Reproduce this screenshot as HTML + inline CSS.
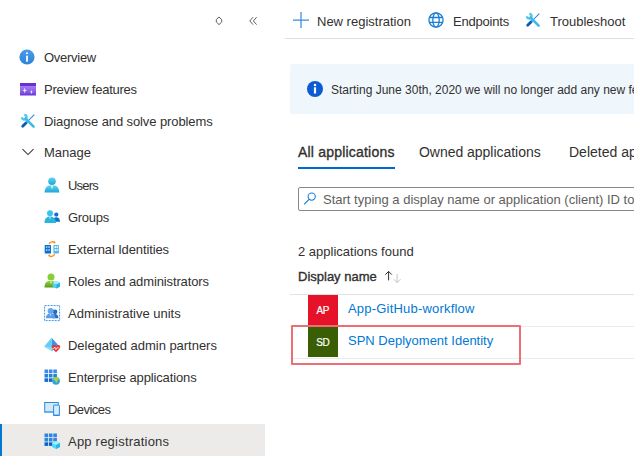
<!DOCTYPE html>
<html><head><meta charset="utf-8">
<style>
html,body{margin:0;padding:0;background:#fff;width:634px;height:458px;overflow:hidden;position:relative}
body{font-family:"Liberation Sans",sans-serif;color:#323130;font-size:13px}
.a{position:absolute;white-space:nowrap;line-height:16px}
.ic{position:absolute;overflow:visible}
.sel{position:absolute;left:0;top:424px;width:265px;height:32px;background:#edebe9}
.selbar{position:absolute;left:0;top:424px;width:2px;height:32px;background:#0078d4}
.sep{position:absolute;left:285px;top:38px;width:349px;height:1px;background:#e1dfdd}
.banner{position:absolute;left:290px;top:64px;width:360px;height:50px;background:#eff6fc;border-radius:2px}
.tabline{position:absolute;left:298px;top:167px;width:97px;height:2px;background:#0068d0}
.search{position:absolute;left:298px;top:187px;width:360px;height:22px;border:1px solid #8a8886;border-radius:2px}
.rowline{position:absolute;left:290px;width:344px;height:1px;background:#edebe9}
.badge{position:absolute;width:30px;height:30px;color:#fff;font-size:10px;line-height:32px;text-align:center;letter-spacing:-0.4px;text-indent:-0.4px;-webkit-text-stroke:0.2px #fff;box-sizing:border-box}
.link{color:#0078d4}
.redbox{position:absolute;left:291px;top:325px;width:230px;height:40px;border:2px solid #ec6f75;box-sizing:border-box;border-radius:1px}
</style></head><body>
<!-- sidebar top controls -->
<svg class="ic" style="left:214px;top:15px" width="10" height="12" viewBox="0 0 10 12"><path d="M5 2 L7.7 4.6 L7.7 7 L5 9.6 L2.3 7 L2.3 4.6 Z" fill="none" stroke="#605e5c" stroke-width="1"/></svg>
<svg class="ic" style="left:247px;top:15px" width="12" height="12" viewBox="0 0 12 12"><path d="M6 2.2 L2.8 6 L6 9.6 M9.6 2.2 L6.4 6 L9.6 9.6" fill="none" stroke="#605e5c" stroke-width="1"/></svg>

<!-- nav items -->
<svg class="ic" style="left:19.3px;top:49px" width="16" height="16" viewBox="0 0 16 16"><defs><linearGradient id="gi" x1="0" y1="0" x2="0" y2="1"><stop offset="0" stop-color="#4a9be8"/><stop offset="1" stop-color="#2a84da"/></linearGradient></defs><circle cx="8" cy="8" r="7.6" fill="url(#gi)"/><rect x="7.1" y="6.7" width="1.8" height="6" fill="#fff"/><circle cx="8" cy="4.3" r="1.05" fill="#fff"/></svg>
<span class="a" style="left:44px;top:50px;letter-spacing:-0.28px">Overview</span>

<svg class="ic" style="left:20px;top:82.5px" width="16" height="13" viewBox="0 0 16 13"><defs><linearGradient id="gp" x1="0" y1="0" x2="0" y2="1"><stop offset="0" stop-color="#b08cf4"/><stop offset="0.6" stop-color="#9266ea"/><stop offset="1" stop-color="#6b35d8"/></linearGradient></defs><rect x="0" y="0" width="16" height="12.5" fill="url(#gp)"/><rect x="0" y="0" width="16" height="3" fill="#6a30d8"/><path d="M4.7 4.6 L5.3 6.9 L7 7.5 L5.3 8.1 L4.7 10.4 L4.1 8.1 L2.4 7.5 L4.1 6.9Z" fill="#fff"/><path d="M11.4 6.8 L11.8 8.5 L12.9 9 L11.8 9.5 L11.4 11.2 L11 9.5 L9.9 9 L11 8.5Z" fill="#f4fbff"/></svg>
<span class="a" style="left:44px;top:82px;letter-spacing:-0.25px">Preview features</span>

<svg class="ic" style="left:21px;top:114px" width="14" height="14" viewBox="0 0 14 14"><path d="M1.7 12.3 L5.2 8.8" stroke="#0b5cad" stroke-width="2.8" stroke-linecap="round"/><path d="M5 9 L13.3 0.7" stroke="#2a86d4" stroke-width="1.05"/><path d="M3.3 1.0 A2.3 2.3 0 1 1 1.0 3.3" fill="none" stroke="#50c8ef" stroke-width="2.3"/><path d="M4.5 4.5 L12.6 12.6" stroke="#3dbbe6" stroke-width="2.6" stroke-linecap="round"/></svg>
<span class="a" style="left:44px;top:114px;letter-spacing:-0.1px">Diagnose and solve problems</span>

<svg class="ic" style="left:22px;top:147px" width="14" height="10" viewBox="0 0 14 10"><path d="M0.5 2.2 L6 7.6 L11.5 2.2" fill="none" stroke="#3b3a39" stroke-width="1.05"/></svg>
<span class="a" style="left:44px;top:145px">Manage</span>

<svg class="ic" style="left:44px;top:177px" width="16" height="16" viewBox="0 0 16 16"><defs><linearGradient id="gu" x1="0" y1="0" x2="0" y2="1"><stop offset="0" stop-color="#5fd3f3"/><stop offset="1" stop-color="#1ea6d6"/></linearGradient></defs><circle cx="8" cy="4.2" r="3.8" fill="url(#gu)"/><path d="M0.6 15.6 C0.6 11 2.8 8.4 6 8.4 L10 8.4 C13.2 8.4 15.3 11 15.3 15.6Z" fill="url(#gu)"/><path d="M7 8.6 L9 8.6 L8.6 11 L8 12 L7.4 11Z" fill="#e0f6fc"/></svg>
<span class="a" style="left:68px;top:178px;letter-spacing:-0.8px">Users</span>

<svg class="ic" style="left:44px;top:209px" width="16" height="16" viewBox="0 0 16 16"><circle cx="12.3" cy="5.6" r="2.1" fill="#0a6fd6"/><path d="M9 12.8 C9 9.5 10.2 8.2 12.3 8.2 C14.4 8.2 16 9.5 16 12.8Z" fill="#0a6fd6"/><circle cx="6" cy="4.3" r="3" fill="#3cc4e8"/><path d="M0.5 14 C0.5 9.8 2.5 7.6 6 7.6 C9.5 7.6 12 9.8 12 14Z" fill="#2ab4e0"/><path d="M5.3 7.8 L6.7 7.8 L6.3 9.8 L6 10.4 L5.7 9.8Z" fill="#e0f6fc"/></svg>
<span class="a" style="left:68px;top:210px;letter-spacing:-0.3px">Groups</span>

<svg class="ic" style="left:44px;top:240px" width="16" height="17" viewBox="0 0 16 17"><rect x="0.7" y="4.9" width="6.3" height="8.6" rx="0.5" fill="#0b6fd2"/><rect x="9.4" y="4.9" width="5.5" height="8.6" rx="0.5" fill="#5ab6e4"/><g fill="#9fd2f4"><rect x="1.9" y="6.2" width="1.5" height="1.7"/><rect x="4.3" y="6.2" width="1.5" height="1.7"/><rect x="1.9" y="9.2" width="1.5" height="1.7"/><rect x="4.3" y="9.2" width="1.5" height="1.7"/></g><g fill="#fff"><rect x="10.6" y="6.2" width="1.4" height="1.7"/><rect x="12.5" y="6.2" width="1.4" height="1.7"/><rect x="10.6" y="9.2" width="1.4" height="1.7"/><rect x="12.5" y="9.2" width="1.4" height="1.7"/></g><path d="M5.2 4.2 C5.6 1.5 9.5 1.2 11 2.6" fill="none" stroke="#ff8c1a" stroke-width="1.3"/><path d="M10.2 1.2 L11.9 3.2 L9.6 3.6Z" fill="#ff8c1a"/><path d="M10.5 14.2 C10.1 16.8 6.2 17 4.8 15.6" fill="none" stroke="#ff8c1a" stroke-width="1.3"/><path d="M5.6 17 L3.9 15 L6.2 14.6Z" fill="#ff8c1a"/></svg>
<span class="a" style="left:68px;top:242px;letter-spacing:-0.13px">External Identities</span>

<svg class="ic" style="left:44px;top:273px" width="16" height="16" viewBox="0 0 16 16"><defs><linearGradient id="gr" x1="0" y1="0" x2="0" y2="1"><stop offset="0" stop-color="#8fd63a"/><stop offset="1" stop-color="#5a9a1e"/></linearGradient></defs><circle cx="7" cy="3.9" r="3.5" fill="#86cf34"/><path d="M0.5 14.5 C0.5 10 2.5 8 5.5 8 L8.5 8 C11 8 12 10 12 14.5Z" fill="url(#gr)"/><path d="M6.3 8.2 L7.7 8.2 L7.4 10.2 L7 11 L6.6 10.2Z" fill="#f2fbe6"/><path d="M12.3 8 L15.9 9.8 L15.9 13.8 L12.3 15.6 L8.8 13.8 L8.8 9.8Z" fill="#4cd3f7"/><path d="M8.8 9.8 L12.3 11.6 L15.9 9.8 L12.3 8Z" fill="#9ff0ff"/><path d="M12.3 11.6 L12.3 15.6 L15.9 13.8 L15.9 9.8Z" fill="#2cb0e6"/></svg>
<span class="a" style="left:68px;top:274px;letter-spacing:-0.12px">Roles and administrators</span>

<svg class="ic" style="left:44px;top:305px" width="16" height="16" viewBox="0 0 16 16"><rect x="0.6" y="0.6" width="15" height="15" fill="none" stroke="#3f96e6" stroke-width="1" stroke-dasharray="2 1"/><circle cx="11" cy="6.8" r="2.4" fill="#1f6fc8"/><path d="M8 13.2 C8 10.4 9.2 9 11 9 C12.8 9 14.4 10.4 14.4 13.2Z" fill="#1f6fc8"/><circle cx="6.6" cy="5.9" r="3" fill="#6aa6ea"/><path d="M1.8 13.2 C1.8 10.2 3.6 8.6 6.6 8.6 C9.6 8.6 11.4 10.2 11.4 13.2Z" fill="#5c9ee8"/><path d="M6 8.8 L7.2 8.8 L6.9 10.5 L6.6 11.1 L6.3 10.5Z" fill="#dbeafa"/></svg>
<span class="a" style="left:68px;top:306px">Administrative units</span>

<svg class="ic" style="left:44px;top:337px" width="16" height="16" viewBox="0 0 16 16"><path d="M7.5 0.7 L13.8 7.5 L8.3 14.3Z" fill="#3f91df"/><path d="M7.5 0.7 L0.2 9.6 L8.3 14.3Z" fill="#5fd0f3"/><path d="M0.2 9.6 L8.3 14.3 L8 10.5Z" fill="#8fdcf5"/><path d="M12 15.2 L8.3 11.4 C7.3 10.3 7.6 8.4 9.3 8.1 C10.5 7.9 11.5 8.6 12 9.3 C12.5 8.6 13.5 7.9 14.7 8.1 C16.4 8.4 16.7 10.3 15.7 11.4Z" fill="#e8323c"/><path d="M8.5 11.3 L10 11.3 L10.8 10 L11.9 12.6 L12.9 10.8 L15.2 10.8" fill="none" stroke="#fff" stroke-width="0.8"/></svg>
<span class="a" style="left:68px;top:338px;letter-spacing:-0.03px">Delegated admin partners</span>

<svg class="ic" style="left:44px;top:369px" width="16" height="16" viewBox="0 0 16 16"><g fill="#3a8ee6"><rect x="0.5" y="0.5" width="3.6" height="3.6"/><rect x="4.9" y="0.5" width="3.6" height="3.6"/><rect x="9.3" y="0.5" width="3.6" height="3.6"/><rect x="0.5" y="4.9" width="3.6" height="3.6" fill="#2a80de"/><rect x="4.9" y="4.9" width="3.6" height="3.6" fill="#2a80de"/><rect x="9.3" y="4.9" width="3.6" height="3.6" fill="#2a80de"/><rect x="0.5" y="9.3" width="3.6" height="3.6" fill="#0f6ad4"/><rect x="4.9" y="9.3" width="3.6" height="3.6" fill="#0f6ad4"/></g><circle cx="12" cy="11.8" r="3.9" fill="#36a2e4"/><path d="M9.4 9.4 C10.4 8.2 12.6 7.8 14 8.6 L15 9.6 L14.6 10.4 L13.8 10.8 L13.2 12.6 L12.4 14.2 L11.8 12.4 L10.6 11.3 L9.3 10.6Z" fill="#a8d82c"/></svg>
<span class="a" style="left:68px;top:370px;letter-spacing:-0.13px">Enterprise applications</span>

<svg class="ic" style="left:44px;top:401px" width="16" height="16" viewBox="0 0 16 16"><rect x="0.7" y="1.5" width="13.6" height="9.6" fill="#d3e8f9" stroke="#2a8ae0" stroke-width="1"/><rect x="0.2" y="10.3" width="14.6" height="1.2" fill="#5aa8ec"/><rect x="9.6" y="4.1" width="5.8" height="10.4" rx="0.5" fill="#d9ecfb" stroke="#2a8ae0" stroke-width="1"/><rect x="9.3" y="13.6" width="6.4" height="1.2" fill="#2a8ae0"/></svg>
<span class="a" style="left:68px;top:402px;letter-spacing:-0.55px">Devices</span>

<div class="sel"></div><div class="selbar"></div>
<svg class="ic" style="left:44px;top:433px" width="16" height="16" viewBox="0 0 16 16"><g fill="#2f86e0"><rect x="0.5" y="0.5" width="3.6" height="3.6"/><rect x="4.9" y="0.5" width="3.6" height="3.6"/><rect x="9.3" y="0.5" width="3.6" height="3.6"/><rect x="0.5" y="4.9" width="3.6" height="3.6"/><rect x="4.9" y="4.9" width="3.6" height="3.6"/><rect x="9.3" y="4.9" width="3.6" height="3.6"/><rect x="0.5" y="9.3" width="3.6" height="3.6" fill="#0a64c8"/><rect x="4.9" y="9.3" width="3.6" height="3.6" fill="#0a64c8"/></g><path d="M12 8 L16 10 L16 14 L12 16 L8 14 L8 10Z" fill="#50d8f8"/><path d="M8 10 L12 12 L16 10 L12 8Z" fill="#a0f0ff"/><path d="M12 12 L12 16 L16 14 L16 10Z" fill="#2ab8ea"/></svg>
<span class="a" style="left:68px;top:434px;letter-spacing:0.22px">App registrations</span>

<!-- toolbar -->
<svg class="ic" style="left:293px;top:12px" width="16" height="16" viewBox="0 0 16 16"><path d="M8 0 V16 M0 8 H16" stroke="#3a8cdc" stroke-width="1.25"/></svg>
<span class="a" style="left:317px;top:14px">New registration</span>
<svg class="ic" style="left:428px;top:12px" width="16" height="16" viewBox="0 0 16 16"><g fill="none" stroke="#1a7fd6" stroke-width="1.3"><circle cx="8" cy="8" r="7.1"/><ellipse cx="8" cy="8" rx="3.2" ry="7.1"/><path d="M1 5.5 H15 M1 10.3 H15"/></g></svg>
<span class="a" style="left:453px;top:14px;letter-spacing:-0.2px">Endpoints</span>
<svg class="ic" style="left:526px;top:13px" width="14" height="14" viewBox="0 0 14 14"><path d="M1.7 12.3 L5.2 8.8" stroke="#0b5cad" stroke-width="2.8" stroke-linecap="round"/><path d="M5 9 L13.3 0.7" stroke="#2a86d4" stroke-width="1.05"/><path d="M3.3 1.0 A2.3 2.3 0 1 1 1.0 3.3" fill="none" stroke="#50c8ef" stroke-width="2.3"/><path d="M4.5 4.5 L12.6 12.6" stroke="#3dbbe6" stroke-width="2.6" stroke-linecap="round"/></svg>
<span class="a" style="left:550px;top:14px">Troubleshoot</span>
<div class="sep"></div>

<!-- banner -->
<div class="banner"></div>
<svg class="ic" style="left:307px;top:81px" width="16" height="16" viewBox="0 0 16 16"><circle cx="8" cy="8" r="8" fill="#0b5bd3"/><rect x="6.9" y="6.3" width="2.2" height="6.2" fill="#fff"/><circle cx="8" cy="4.1" r="1.25" fill="#fff"/></svg>
<span class="a" style="left:331px;top:82px;font-size:12px">Starting June 30th, 2020 we will no longer add any new features</span>

<!-- tabs -->
<span class="a" style="left:298px;top:144px;font-size:14px;letter-spacing:0.2px;-webkit-text-stroke:0.35px #323130">All applications</span>
<div class="tabline"></div>
<span class="a" style="left:419px;top:144px;font-size:14px;letter-spacing:-0.03px">Owned applications</span>
<span class="a" style="left:569px;top:144px;font-size:14px">Deleted applications</span>

<!-- search -->
<div class="search"></div>
<svg class="ic" style="left:303px;top:192px" width="13" height="13" viewBox="0 0 13 13"><circle cx="8.7" cy="4.6" r="3.6" fill="none" stroke="#1a7fd6" stroke-width="1.1"/><path d="M6.1 7.3 L1.5 11.9" stroke="#1a7fd6" stroke-width="1.2" stroke-linecap="round"/></svg>
<span class="a" style="left:323px;top:192px;color:#605e5c">Start typing a display name or application (client) ID to filter these results</span>

<span class="a" style="left:298px;top:244px">2 applications found</span>
<span class="a" style="left:298px;top:269px;letter-spacing:0px;-webkit-text-stroke:0.35px #323130">Display name</span>
<svg class="ic" style="left:380px;top:266px" width="26" height="22" viewBox="0 0 26 22"><path d="M8.6 5.5 V14.4 M5.3 8.7 L8.6 5.4 L11.9 8.7" fill="none" stroke="#323130" stroke-width="1"/><path d="M17.1 7.9 V16.6 M13.7 13.2 L17.1 16.6 L20.5 13.2" fill="none" stroke="#c8c6c4" stroke-width="1"/></svg>

<div class="rowline" style="top:294px;background:#e3e1df"></div>
<div class="badge" style="left:308px;top:295px;background:#e5122a">AP</div>
<span class="a link" style="left:348px;top:301px;letter-spacing:0.2px">App-GitHub-workflow</span>
<div class="rowline" style="top:326px"></div>
<div class="badge" style="left:308px;top:327px;background:#3a5e04">SD</div>
<span class="a link" style="left:348px;top:333px">SPN Deplyoment Identity</span>
<div class="rowline" style="top:358px"></div>
<div class="redbox"></div>
</body></html>
